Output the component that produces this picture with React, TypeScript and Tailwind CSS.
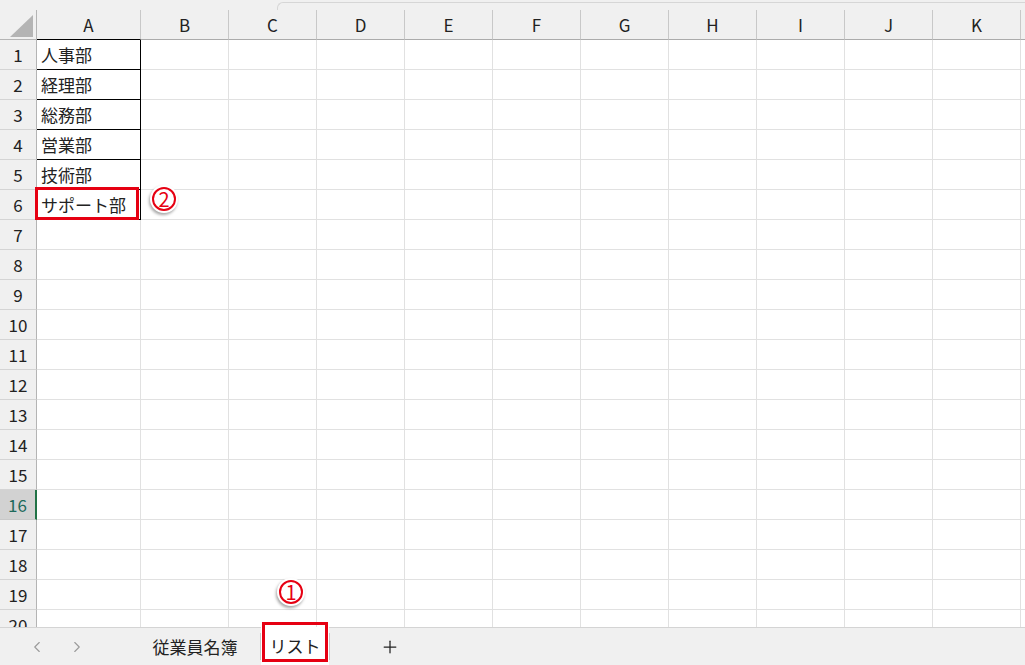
import { ChevronLeft, ChevronRight, Plus } from 'lucide-react'

const cols = ['A', 'B', 'C', 'D', 'E', 'F', 'G', 'H', 'I', 'J', 'K']
const items = ['人事部', '経理部', '総務部', '営業部', '技術部', 'サポート部']
const rows = Array.from({ length: 20 }, (_, i) => i + 1)

const Marker = ({ n, className }: { n: string; className: string }) => (
  <span
    className={`absolute flex h-[28px] w-[28px] items-center justify-center rounded-full bg-white shadow-[-1px_2px_3px_rgba(0,0,0,0.35)] ${className}`}
  >
    <span className="flex h-[24px] w-[24px] items-center justify-center rounded-full border-2 border-[#e60012] pb-[1px] text-[20px] leading-none text-[#e60012]">
      {n}
    </span>
  </span>
)

export default function App() {
  return (
    <div
      className="flex h-[665px] w-[1025px] flex-col overflow-hidden bg-[#f0f0f0] text-[#222]"
      style={{ fontFamily: '"Noto Sans CJK JP", "Noto Sans", sans-serif' }}
    >
      <div className="flex h-[10px] shrink-0">
        <div className="w-[277px]" />
        <div className="mt-[2px] flex-1 rounded-tl-md border-l border-t border-[#d6d6d6]" />
      </div>

      <div className="relative flex-1 overflow-hidden bg-white">
        <div className="grid grid-cols-[37px_104px_repeat(10,88px)_1fr] auto-rows-[30px]">
          {/* header row */}
          <div className="relative border-b border-r border-[#b4b4b4] bg-[#f0f0f0]">
            <svg className="absolute left-[10px] top-[5px]" width="23" height="22" viewBox="0 0 23 22">
              <polygon points="23,0 23,22 0,22" fill="#b4b4b4" />
            </svg>
          </div>
          {cols.map((c, i) => (
            <div
              key={c}
              className={`flex items-center justify-center border-b border-r border-r-[#c8c8c8] bg-[#f0f0f0] text-[17px] text-[#222] ${
                i === 0 ? 'border-b-black' : 'border-b-[#ababab]'
              }`}
            >
              {c}
            </div>
          ))}
          <div className="border-b border-[#ababab] bg-[#f0f0f0]" />

          {rows.map((r) => (
            <>
              <div
                key={`h${r}`}
                className={`flex items-center justify-center border-b text-[17px] ${
                  r === 16
                    ? 'border-r-2 border-b-[#c8c8c8] border-r-[#217346] bg-[#d2d2d2] text-[#1e6a5c]'
                    : 'border-r border-b-[#d4d4d4] border-r-[#b4b4b4] bg-[#f0f0f0]'
                }`}
              >
                {r}
              </div>
              {cols.map((c, i) => {
                const inTable = i === 0 && r <= 6
                return (
                  <div
                    key={`${c}${r}`}
                    className={`relative flex items-center border-b border-r pl-[4px] text-[17px] text-[#222] ${
                      inTable ? 'border-black' : 'border-[#e1e1e1]'
                    }`}
                  >
                    {inTable && <span className="whitespace-nowrap">{items[r - 1]}</span>}
                    {inTable && r === 6 && (
                      <span className="absolute -left-[2px] -top-[3px] h-[33px] w-[104px] border-[3.5px] border-[#e60012]" />
                    )}
                  </div>
                )
              })}
              <div key={`x${r}`} className="border-b border-[#e1e1e1]" />
            </>
          ))}
        </div>

        <Marker n="2" className="left-[150px] top-[175px]" />
        <Marker n="1" className="left-[277px] top-[568px]" />
      </div>

      <div className="flex h-[38px] shrink-0 items-stretch border-t border-[#d4d4d4] bg-[#f0f0f0] text-[17px] text-[#222]">
        <div className="flex w-[50px] items-center justify-end pr-[4px] text-[#9a9a9a]">
          <ChevronLeft size={18} strokeWidth={1.5} />
        </div>
        <div className="flex w-[40px] items-center justify-end pr-[4px] text-[#9a9a9a]">
          <ChevronRight size={18} strokeWidth={1.5} />
        </div>
        <div className="flex w-[170px] items-center justify-center pl-[40px]">従業員名簿</div>
        <div className="my-[5px] w-px bg-[#c8c8c8]" />
        <div className="relative -mt-[1px] flex w-[68px] items-center justify-center bg-white pb-[1px]">
          リスト
          <span className="absolute inset-x-[1px] bottom-[3px] top-[-5px] border-[3.5px] border-[#e60012]" />
        </div>
        <div className="my-[5px] w-px bg-[#c8c8c8]" />
        <div className="flex w-[120px] items-center justify-center">
          <Plus size={20} strokeWidth={1.5} />
        </div>
      </div>
    </div>
  )
}
